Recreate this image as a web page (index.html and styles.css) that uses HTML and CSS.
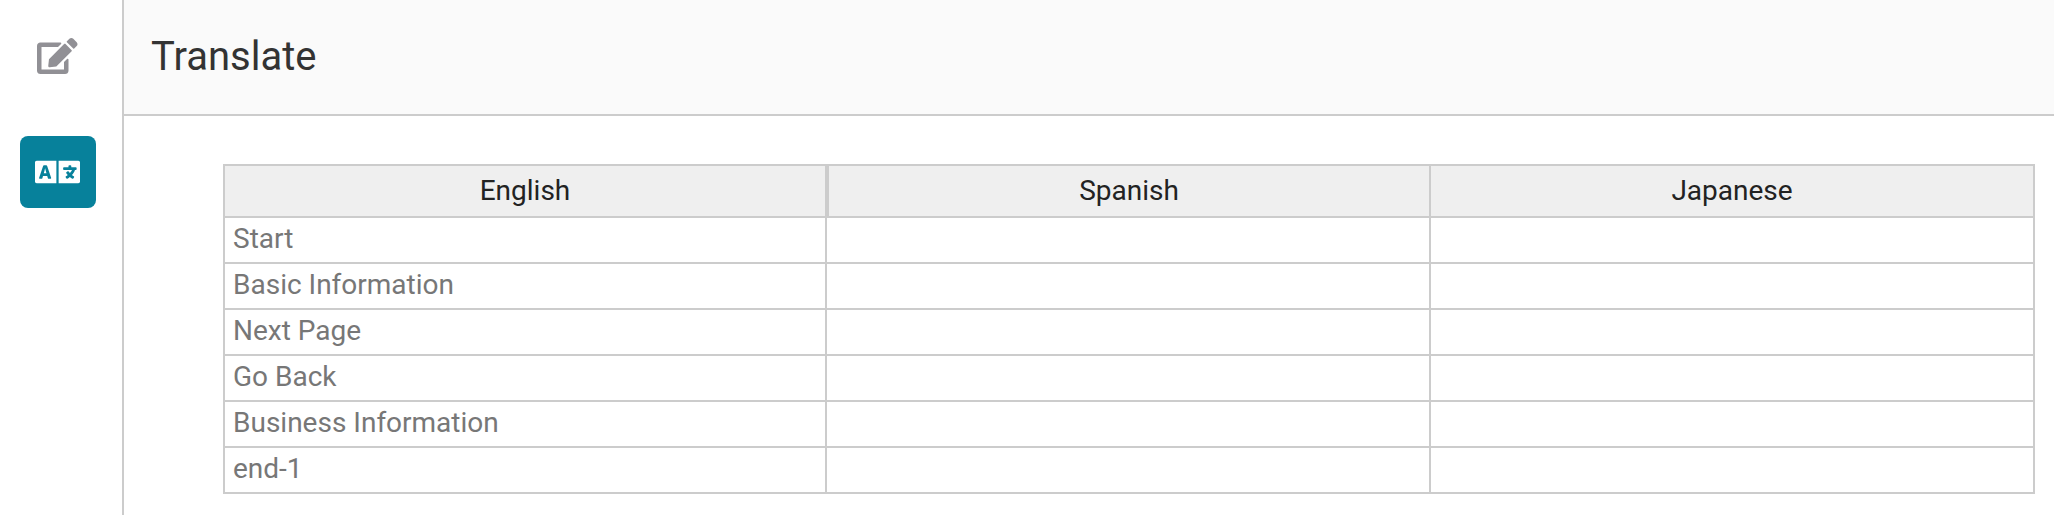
FILE: index.html
```html
<!DOCTYPE html>
<html lang="en">
<head>
  <meta charset="UTF-8" />
  <meta name="viewport" content="width=device-width, initial-scale=1" />
  <title>Translate</title>
  <link rel="stylesheet" href="styles.css">
</head>
<body>
  <nav class="sidebar">
    <button type="button" class="nav-btn" aria-label="Edit">
      <svg viewBox="0 0 576 512" class="icon"><path d="M402.6 83.2l90.2 90.2c3.8 3.8 3.8 10 0 13.8L274.4 405.6l-92.8 10.3c-12.4 1.4-22.9-9.1-21.5-21.5l10.3-92.8L388.8 83.2c3.8-3.8 10-3.8 13.8 0zm162-22.9l-48.8-48.8c-15.2-15.2-39.9-15.2-55.2 0l-35.4 35.4c-3.8 3.8-3.8 10 0 13.8l90.2 90.2c3.8 3.8 10 3.8 13.8 0l35.4-35.4c15.2-15.3 15.2-40 0-55.2zM384 346.2V448H64V128h229.8c3.2 0 6.2-1.3 8.5-3.5l40-40c7.6-7.6 2.2-20.5-8.5-20.5H48C21.5 64 0 85.5 0 112v352c0 26.5 21.5 48 48 48h352c26.5 0 48-21.5 48-48V306.2c0-10.7-12.9-16-20.5-8.5l-40 40c-2.2 2.3-3.5 5.3-3.5 8.5z"/></svg>
    </button>
    <button type="button" class="nav-btn active" aria-label="Translate">
      <svg viewBox="0 0 640 512" class="icon"><path d="M152.1 236.2c-3.5-12.1-7.8-33.2-7.8-33.2h-.5s-4.3 21.1-7.8 33.2l-11.1 37.5H163zM616 96H336v320h280c13.3 0 24-10.7 24-24V120c0-13.3-10.7-24-24-24zm-24 120c0 6.6-5.4 12-12 12h-11.4c-6.9 23.6-21.7 47.4-42.7 69.9 8.4 6.4 17.1 12.5 26.1 18 5.5 3.4 7.3 10.5 4.1 16.2l-7.9 13.9c-3.4 5.9-10.9 7.8-16.7 4.3-12.6-7.8-24.5-16.1-35.4-24.9-10.9 8.7-22.7 17.1-35.4 24.9-5.8 3.5-13.3 1.6-16.7-4.3l-7.9-13.9c-3.2-5.6-1.4-12.8 4.2-16.2 9.3-5.7 18-11.7 26.1-18-7.9-8.4-14.9-17-21-25.7-4-5.7-2.2-13.6 3.7-17.1l6.5-3.9 7.3-4.3c5.4-3.2 12.4-1.7 16 3.4 5 7 10.8 14 17.4 20.9 13.5-14.2 23.8-28.9 30-43.2H412c-6.6 0-12-5.4-12-12v-16c0-6.6 5.4-12 12-12h64v-16c0-6.6 5.4-12 12-12h16c6.6 0 12 5.4 12 12v16h64c6.6 0 12 5.4 12 12zM0 120v272c0 13.3 10.7 24 24 24h280V96H24c-13.3 0-24 10.7-24 24zm58.9 216.1L116.4 167c1.7-4.9 6.2-8.1 11.4-8.1h32.5c5.1 0 9.7 3.3 11.4 8.1l57.5 169.1c2.6 7.8-3.1 15.9-11.4 15.9h-22.9a12 12 0 0 1-11.5-8.6l-9.4-31.9h-60.2l-9.1 31.8c-1.5 5.1-6.2 8.7-11.5 8.7H70.3c-8.2 0-14-8.1-11.4-15.9z"/></svg>
    </button>
  </nav>

  <div class="page">
    <header class="page-header">
      <h1>Translate</h1>
    </header>

    <main class="content">
      <table class="translations">
        <thead>
          <tr>
            <th scope="col">English</th>
            <th scope="col">Spanish</th>
            <th scope="col">Japanese</th>
          </tr>
        </thead>
        <tbody>
          <tr><td>Start</td><td></td><td></td></tr>
          <tr><td>Basic Information</td><td></td><td></td></tr>
          <tr><td>Next Page</td><td></td><td></td></tr>
          <tr><td>Go Back</td><td></td><td></td></tr>
          <tr><td>Business Information</td><td></td><td></td></tr>
          <tr><td>end-1</td><td></td><td></td></tr>
        </tbody>
      </table>
    </main>
  </div>
</body>
</html>
```
FILE: styles.css
```css
* {
  box-sizing: border-box;
}
body {
  font-family: Roboto, "Liberation Sans", sans-serif;
  font-size: 28px;
  background: #fff;
  color: #222;
  margin: 0;
  min-height: 100vh;
  display: flex;
}

/* Sidebar */
.sidebar {
  flex: none;
  display: flex;
  flex-direction: column;
  gap: 44px;
  padding: 20px 26px 20px 20px;
  border-right: 2px solid #ccc;
}
.nav-btn {
  display: flex;
  align-items: center;
  justify-content: center;
  width: 76px;
  height: 72px;
  padding: 0 1px 1px 0;
  border: none;
  border-radius: 8px;
  background: transparent;
  color: #919095;
  cursor: pointer;
}
.nav-btn.active {
  background: #07819b;
  color: #fff;
}
.icon {
  height: 36px;
  fill: currentColor;
}

/* Page */
.page {
  flex: 1;
  min-width: 0;
}
.page-header {
  padding: 32px 27px;
  background: #fafafa;
  border-bottom: 2px solid #ccc;
}
h1 {
  margin: 0;
  font-size: 40px;
  font-weight: 400;
  line-height: 50px;
  color: #333;
}
.content {
  padding: 48px 19px 20px 99px;
}

/* Translations table */
.translations {
  width: 100%;
  table-layout: fixed;
  border-collapse: separate;
  border-spacing: 0;
}
th,
td {
  border: solid #ccc;
  border-width: 0 2px 2px 0;
}
th {
  padding: 0 8px;
  border-top-width: 2px;
  background: #efefef;
  font-weight: 400;
  line-height: 50px;
  text-align: center;
}
/* second header also gets a left border, which makes the double divider */
th:nth-child(-n+2),
td:first-child {
  border-left-width: 2px;
}
td {
  height: 46px;
  padding: 0 8px 2px;
  line-height: 42px;
  color: #777;
}
```
